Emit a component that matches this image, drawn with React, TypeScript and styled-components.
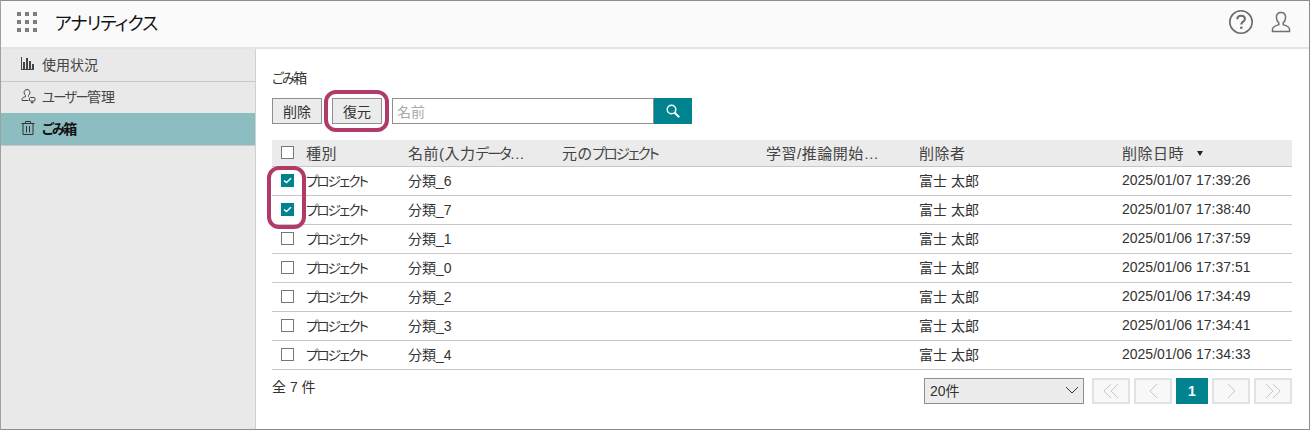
import React from "react";
import styled, { createGlobalStyle } from "styled-components";

const TEAL = "#00838f";
const MARK = "#b03a68";
const FONT = `"Liberation Sans", "Noto Sans CJK JP", sans-serif`;

const GlobalStyle = createGlobalStyle`
  html, body { margin: 0; padding: 0; background: #fff; }
  * { box-sizing: border-box; }
`;

const Frame = styled.div`
  width: 1310px;
  height: 430px;
  border: 1px solid #8c8c8c;
  border-left-color: #a0a0a0;
  display: flex;
  flex-direction: column;
  font-family: ${FONT};
  font-feature-settings: "palt";
  font-size: 14px;
  color: #333;
  background: #fff;
  overflow: hidden;
`;

// kana in the reference are narrower than the kanji next to them
const Kana = styled.span`
  font-size: 0.96em;
  letter-spacing: -0.136em;
`;

const Header = styled.header`
  height: 48px;
  flex: none;
  display: flex;
  align-items: center;
  padding: 0 15px 4px 16px;
  background: #fafafa;
  border-bottom: 2px solid #e4e4e4;
`;

const AppTitle = styled.div`
  margin-left: 18px;
  font-size: 18px;
  letter-spacing: -1px;
  color: #111;
  flex: 1;
`;

const HeaderIcons = styled.div`
  display: flex;
  align-items: center;
  gap: 17px;
  margin-right: 3px;
`;

const Body = styled.div`
  flex: 1;
  display: flex;
  min-height: 0;
`;

const Sidebar = styled.nav`
  width: 255px;
  flex: none;
  padding-top: 1px;
  background: #e9e9e9;
  border-right: 1px solid #d0d0d0;
`;

const NavItem = styled.div<{ $active?: boolean }>`
  height: ${(p) => (p.$active ? "33px" : "32px")};
  margin-top: ${(p) => (p.$active ? "-1px" : "0")};
  display: flex;
  align-items: center;
  gap: 6px;
  padding: 0 0 3px 19px;
  font-size: 14px;
  border-bottom: 1px solid #c8c8c8;
  color: ${(p) => (p.$active ? "#111" : "#444")};
  background: ${(p) => (p.$active ? "#8cbdc1" : "transparent")};
  font-weight: ${(p) => (p.$active ? 700 : 400)};
`;

const Main = styled.main`
  flex: 1;
  padding: 20px 17px 0 16px;
`;

const PageTitle = styled.div`
  height: 18px;
  font-size: 14px;
  line-height: 18px;
  color: #333;
`;

const Toolbar = styled.div`
  display: flex;
  margin-top: 11px;
  height: 26px;
`;

const Btn = styled.button<{ $mark?: boolean }>`
  position: relative;
  width: 50px;
  height: 26px;
  padding: 0;
  margin-right: 10px;
  background: #ececec;
  border: 1px solid #8f8f8f;
  font-family: ${FONT};
  font-size: 14px;
  color: #333;
  ${(p) =>
    p.$mark &&
    `
    &::after {
      content: "";
      position: absolute;
      left: -9px;
      right: -8px;
      top: -9px;
      bottom: -9px;
      border: 4px solid ${MARK};
      border-radius: 12px;
    }
  `}
`;

const SearchInput = styled.div`
  width: 262px;
  height: 26px;
  border: 1px solid #8f8f8f;
  padding-left: 4px;
  display: flex;
  align-items: center;
  font-size: 14px;
  color: #a8a8a8;
`;

const SearchBtn = styled.div`
  width: 38px;
  height: 26px;
  background: ${TEAL};
  display: flex;
  align-items: center;
  justify-content: center;
`;

const Table = styled.div`
  position: relative;
  margin-top: 16px;
`;

const Mark = styled.div`
  position: absolute;
  left: -5px;
  top: 26px;
  width: 39px;
  height: 63px;
  border: 4px solid ${MARK};
  border-radius: 12px;
`;

const Row = styled.div<{ $head?: boolean }>`
  display: grid;
  grid-template-columns: 34px 102px 154px 204px 153px 203px 1fr;
  align-items: center;
  height: ${(p) => (p.$head ? "27px" : "29px")};
  padding-bottom: 2px;
  border-bottom: 1px solid #c8c8c8;
  background: ${(p) => (p.$head ? "#ebebeb" : "#fff")};
  font-size: ${(p) => (p.$head ? "15px" : "14px")};
  letter-spacing: ${(p) => (p.$head ? "0.5px" : "normal")};
  color: ${(p) => (p.$head ? "#444" : "#333")};
`;

const Cell = styled.div`
  white-space: nowrap;
  overflow: hidden;
`;

const CheckCell = styled.div`
  padding-left: 9px;
  display: flex;
  align-items: center;
`;

const Box = styled.span<{ $on?: boolean }>`
  width: 13px;
  height: 13px;
  display: flex;
  align-items: center;
  justify-content: center;
  background: ${(p) => (p.$on ? TEAL : "#fff")};
  border: 1px solid ${(p) => (p.$on ? TEAL : "#777")};
`;

const SortArrow = styled.span`
  display: inline-block;
  margin-left: 13px;
  vertical-align: 3px;
  border-left: 3px solid transparent;
  border-right: 3px solid transparent;
  border-top: 5px solid #222;
`;

const Footer = styled.div`
  display: flex;
  align-items: flex-start;
  margin-top: 8px;
`;

const Count = styled.div`
  flex: 1;
  font-size: 14px;
  line-height: 18px;
`;

const PageSize = styled.div`
  width: 160px;
  height: 26px;
  margin-right: 8px;
  padding: 0 4px 2px 5px;
  display: flex;
  align-items: center;
  justify-content: space-between;
  background: #ececec;
  border: 1px solid #8f8f8f;
  font-size: 14px;
  color: #333;
`;

const Pager = styled.div`
  display: flex;
  gap: 4px;
`;

const PageBtn = styled.div<{ $active?: boolean }>`
  width: ${(p) => (p.$active ? "32px" : "38px")};
  height: 26px;
  display: flex;
  align-items: center;
  justify-content: center;
  font-size: 14px;
  font-weight: 700;
  color: #fff;
  background: ${(p) => (p.$active ? TEAL : "#f8f8f8")};
  border: ${(p) => (p.$active ? "none" : "2px solid #e2e2e2")};
`;

const rows = [
  { name: "分類_6", date: "2025/01/07 17:39:26", on: true },
  { name: "分類_7", date: "2025/01/07 17:38:40", on: true },
  { name: "分類_1", date: "2025/01/06 17:37:59" },
  { name: "分類_0", date: "2025/01/06 17:37:51" },
  { name: "分類_2", date: "2025/01/06 17:34:49" },
  { name: "分類_3", date: "2025/01/06 17:34:41" },
  { name: "分類_4", date: "2025/01/06 17:34:33" },
];

function AppsIcon() {
  const dots = [];
  for (let y = 0; y < 3; y++) {
    for (let x = 0; x < 3; x++) {
      dots.push(<rect key={`${x}-${y}`} x={x * 8} y={y * 8} width="4" height="4" fill="#7d7d7d" />);
    }
  }
  return (
    <svg width="20" height="20" viewBox="0 0 20 20">
      {dots}
    </svg>
  );
}

function HelpIcon() {
  return (
    <svg width="26" height="26" viewBox="0 0 26 26" fill="none" stroke="#6b6b6b">
      <circle cx="13" cy="13" r="11.2" strokeWidth="1.6" />
      <path d="M9.3 10.2c0-2.2 1.7-3.5 3.8-3.5s3.8 1.2 3.8 3.2c0 2.8-3.6 2.8-3.6 5.6" strokeWidth="2.1" />
      <circle cx="13.3" cy="18.8" r="1.3" fill="#6b6b6b" stroke="none" />
    </svg>
  );
}

function UserIcon() {
  return (
    <svg width="20" height="22" viewBox="0 0 20 22" fill="none" stroke="#77706a" strokeWidth="1.5">
      <path d="M10 1.500c3 0 4.600 2.100 4.600 5 0 2.500-1 4.300-2.400 5.400v1.800c2.600.8 6.300 1.700 6.300 4.300v2.500h-17v-2.500c0-2.600 3.700-3.500 6.300-4.300v-1.800C6.400 10.800 5.400 9 5.400 6.500c0-2.900 1.600-5 4.600-5z" />
    </svg>
  );
}

function ChartIcon() {
  return (
    <svg width="16" height="14" viewBox="0 0 16 14" fill="#444">
      <rect x="1" y="0" width="1" height="13" />
      <rect x="1" y="12" width="13" height="1" />
      <rect x="3" y="5" width="2" height="7" />
      <rect x="6" y="1" width="2" height="11" />
      <rect x="9" y="4" width="2" height="8" />
      <rect x="12" y="7" width="2" height="5" />
    </svg>
  );
}

function UsersIcon() {
  return (
    <svg width="16" height="16" viewBox="0 0 16 16" fill="none" stroke="#444" strokeWidth="1">
      <path d="M7 1.500c1.800 0 2.900 1.300 2.900 3 0 1.300-.6 2.400-1.400 3v1.200M5.500 7.500c-.8-.6-1.400-1.700-1.400-3 0-1.700 1.100-3 2.900-3M5.500 7.500v1.200c-1.500.4-3.500 1-3.500 2.600v1.200h6.500" />
      <rect x="9.500" y="9.500" width="5.500" height="3.500" rx="1" />
      <path d="M11 14.500h2.500" strokeWidth="1.500" />
    </svg>
  );
}

function TrashIcon() {
  return (
    <svg width="16" height="16" viewBox="0 0 16 16" fill="none" stroke="#333" strokeWidth="1">
      <path d="M1.500 3.500h13M5.500 3.500v-2h5v2M3 3.500v11h10v-11M6.500 6v6.500M9.500 6v6.500" />
    </svg>
  );
}

function SearchIcon() {
  return (
    <svg width="14" height="14" viewBox="0 0 14 14" fill="none" stroke="#fff">
      <circle cx="5.500" cy="5.500" r="4.300" strokeWidth="1.500" />
      <path d="M8.700 8.700l4.500 4.500" strokeWidth="2" />
    </svg>
  );
}

function Check() {
  return (
    <svg width="9" height="7" viewBox="0 0 9 7" fill="none" stroke="#fff" strokeWidth="1.500">
      <path d="M1 3.500l2.500 2L8 1.200" />
    </svg>
  );
}

function SelectArrow() {
  return (
    <svg width="14" height="8" viewBox="0 0 14 8" fill="none" stroke="#333" strokeWidth="1">
      <path d="M1 1l6 6 6-6" />
    </svg>
  );
}

// chevrons of the pager: dir is -1 (left) or 1 (right), count is 1 or 2
function PagerIcon({ dir, count }: { dir: 1 | -1; count: 1 | 2 }) {
  const points = dir === 1 ? "1,1 8,8 1,15" : "8,1 1,8 8,15";
  return (
    <svg width={count === 2 ? 16 : 9} height="16" viewBox={count === 2 ? "0 0 16 16" : "0 0 9 16"} fill="none" stroke="#c8c8c8" strokeWidth="1">
      <polyline points={points} />
      {count === 2 && <polyline points={points} transform="translate(7 0)" />}
    </svg>
  );
}

export default function App() {
  return (
    <Frame>
      <GlobalStyle />
      <Header>
        <AppsIcon />
        <AppTitle>アナリティクス</AppTitle>
        <HeaderIcons>
          <HelpIcon />
          <UserIcon />
        </HeaderIcons>
      </Header>
      <Body>
        <Sidebar>
          <NavItem>
            <ChartIcon />
            使用状況
          </NavItem>
          <NavItem>
            <UsersIcon />
            <span>
              <Kana>ユーザー</Kana>管理
            </span>
          </NavItem>
          <NavItem $active>
            <TrashIcon />
            <span>
              <Kana>ごみ</Kana>箱
            </span>
          </NavItem>
        </Sidebar>
        <Main>
          <PageTitle>
            <Kana>ごみ</Kana>箱
          </PageTitle>
          <Toolbar>
            <Btn>削除</Btn>
            <Btn $mark>復元</Btn>
            <SearchInput>名前</SearchInput>
            <SearchBtn>
              <SearchIcon />
            </SearchBtn>
          </Toolbar>
          <Table>
            <Row $head>
              <CheckCell>
                <Box />
              </CheckCell>
              <Cell>種別</Cell>
              <Cell>
                名前(入力<Kana>データ</Kana>…
              </Cell>
              <Cell>
                元の<Kana>プロジェクト</Kana>
              </Cell>
              <Cell>学習/推論開始…</Cell>
              <Cell>削除者</Cell>
              <Cell>
                削除日時
                <SortArrow />
              </Cell>
            </Row>
            {rows.map((r) => (
              <Row key={r.name}>
                <CheckCell>
                  <Box $on={r.on}>{r.on && <Check />}</Box>
                </CheckCell>
                <Cell>
                  <Kana>プロジェクト</Kana>
                </Cell>
                <Cell>{r.name}</Cell>
                <Cell />
                <Cell />
                <Cell>富士 太郎</Cell>
                <Cell>{r.date}</Cell>
              </Row>
            ))}
            <Mark />
          </Table>
          <Footer>
            <Count>全 7 件</Count>
            <PageSize>
              20件
              <SelectArrow />
            </PageSize>
            <Pager>
              <PageBtn>
                <PagerIcon dir={-1} count={2} />
              </PageBtn>
              <PageBtn>
                <PagerIcon dir={-1} count={1} />
              </PageBtn>
              <PageBtn $active>1</PageBtn>
              <PageBtn>
                <PagerIcon dir={1} count={1} />
              </PageBtn>
              <PageBtn>
                <PagerIcon dir={1} count={2} />
              </PageBtn>
            </Pager>
          </Footer>
        </Main>
      </Body>
    </Frame>
  );
}
